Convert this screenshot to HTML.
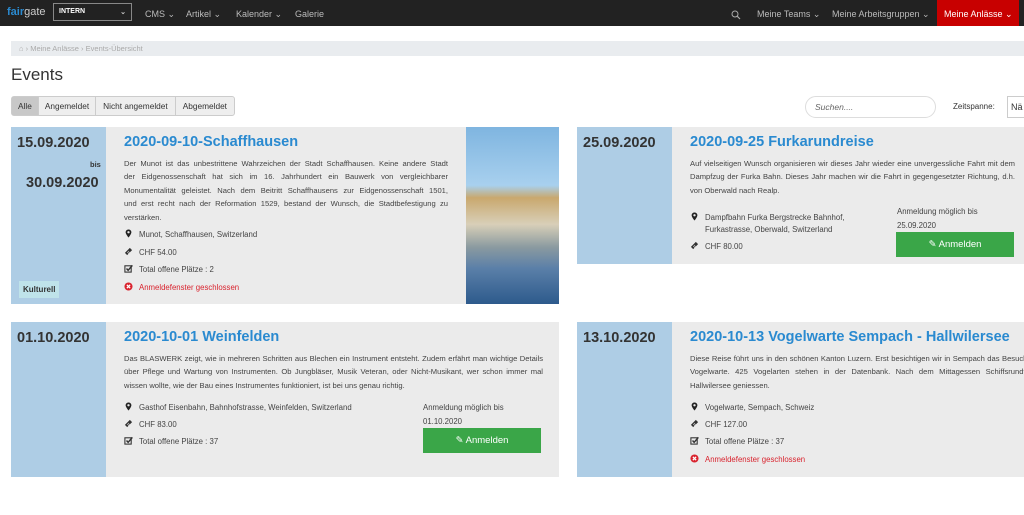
<!DOCTYPE html>
<html><head><meta charset="utf-8"><style>
*{margin:0;padding:0;box-sizing:border-box}
body{width:1024px;height:515px;overflow:hidden;background:#fff;font-family:"Liberation Sans",sans-serif;color:#333;position:relative}
.a{position:absolute}
.nav{left:0;top:0;width:1024px;height:26px;background:#222}
.nt{color:#bbb;font-size:9px;top:9px;white-space:nowrap}
.card{background:#ebebeb;overflow:hidden}
.date{background:#aecde5;position:absolute;left:0;top:0;bottom:0;width:95px}
.dt{font-size:14.5px;font-weight:bold;color:#333;position:absolute}
.ti{font-size:14.5px;font-weight:bold;color:#2a8ad0;position:absolute;left:113px;top:7px;white-space:nowrap}
.tx{font-size:7.6px;line-height:13.4px;color:#444;position:absolute;left:113px;text-align:justify}
.tx .j{text-align:justify;text-align-last:justify;white-space:nowrap}
.li{font-size:7.8px;color:#444;position:absolute;left:113px;white-space:nowrap;line-height:11px}
.li svg{display:inline-block;width:9px;height:9px;margin-right:6px;vertical-align:-1px}
.red{color:#d9232e}
.btn{background:#3aa648;color:#fff;font-size:9.5px;text-align:center;line-height:25px;position:absolute;width:118px;height:25px}
.ab{font-size:7.8px;color:#444;position:absolute;line-height:13.5px}
</style></head><body>
<svg width="0" height="0" style="position:absolute">
<defs>
<symbol id="pin" viewBox="0 0 10 10"><path d="M5 0.5C3 0.5 1.8 2 1.8 3.6 1.8 5.6 5 9.5 5 9.5S8.2 5.6 8.2 3.6C8.2 2 7 0.5 5 0.5Z" fill="#222"/><circle cx="5" cy="3.6" r="1.3" fill="#ebebeb"/></symbol>
<symbol id="tk" viewBox="0 0 10 10"><path d="M1 6.5L6.5 1 9 3.5 3.5 9Z" fill="#333"/><path d="M3.5 5.5L5.5 7.5M4.5 4.5L6.5 6.5" stroke="#ebebeb" stroke-width=".6"/></symbol>
<symbol id="ck" viewBox="0 0 10 10"><rect x="1" y="2" width="7" height="7" fill="none" stroke="#333" stroke-width="1.2"/><path d="M2.8 5L4.6 7 9.3 1.5" fill="none" stroke="#333" stroke-width="1.6"/></symbol>
<symbol id="x" viewBox="0 0 10 10"><circle cx="5" cy="5" r="4.5" fill="#d9232e"/><path d="M3.2 3.2L6.8 6.8M6.8 3.2L3.2 6.8" stroke="#fff" stroke-width="1.4"/></symbol>
</defs></svg>
<div class="a nav"></div>
<div class="a" style="left:7px;top:6px;font-size:11px;font-weight:bold;color:#2a8ad0">fair<span style="color:#ccc;font-weight:normal">gate</span></div>
<div class="a" style="left:53px;top:3px;width:79px;height:18px;border:1px solid #888;color:#fff;font-size:7px;font-weight:bold;padding:4px 5px">INTERN<span style="float:right;color:#ccc">⌄</span></div>
<div class="a nt" style="left:145px">CMS ⌄</div>
<div class="a nt" style="left:186px">Artikel ⌄</div>
<div class="a nt" style="left:236px">Kalender ⌄</div>
<div class="a nt" style="left:295px">Galerie</div>
<div class="a" style="left:731px;top:7px"><svg width="10" height="10" viewBox="0 0 10 10"><circle cx="4" cy="4" r="3" fill="none" stroke="#aaa" stroke-width="1"/><path d="M6.2 6.2L9 9" stroke="#aaa" stroke-width="1.2"/></svg></div>
<div class="a nt" style="left:757px">Meine Teams ⌄</div>
<div class="a nt" style="left:832px">Meine Arbeitsgruppen ⌄</div>
<div class="a" style="left:937px;top:0;width:82px;height:26px;background:#c80000"></div>
<div class="a nt" style="left:944px;color:#fff">Meine Anlässe ⌄</div>
<div class="a" style="left:11px;top:41px;width:1013px;height:15px;background:#e9ecef"></div>
<div class="a" style="left:19px;top:44px;font-size:7.5px;color:#aaa">⌂ › Meine Anlässe › Events-Übersicht</div>
<div class="a" style="left:11px;top:65px;font-size:17px;color:#333">Events</div>
<div class="a" style="left:11px;top:96px;height:20px;border:1px solid #ccc;border-radius:3px;display:flex;font-size:8.3px;color:#333;background:#eee">
<div style="background:#c8c8c8;padding:0 6px;line-height:18px">Alle</div>
<div style="padding:0 6px;line-height:18px;border-left:1px solid #ccc">Angemeldet</div>
<div style="padding:0 7px;line-height:18px;border-left:1px solid #ccc">Nicht angemeldet</div>
<div style="padding:0 7px;line-height:18px;border-left:1px solid #ccc">Abgemeldet</div></div>
<div class="a" style="left:805px;top:96px;width:131px;height:22px;border:1px solid #ddd;border-radius:11px;font-size:8.5px;font-style:italic;color:#666;padding:5px 9px">Suchen....</div>
<div class="a" style="left:953px;top:102px;font-size:8px;color:#333">Zeitspanne:</div>
<div class="a" style="left:1007px;top:96px;width:30px;height:22px;border:1px solid #ccc;font-size:9px;padding:5px 3px">Nä</div>

<div class="a card" style="left:11px;top:127px;width:548px;height:177px">
<div class="date"></div>
<div class="dt" style="left:6px;top:8px">15.09.2020</div>
<div class="a" style="left:79px;top:33px;font-size:7.5px;font-weight:bold">bis</div>
<div class="dt" style="left:15px;top:48px">30.09.2020</div>
<div class="a" style="left:8px;top:154px;background:#bfe3ea;font-size:8px;font-weight:bold;padding:4px 4px">Kulturell</div>
<div class="ti">2020-09-10-Schaffhausen</div>
<div class="tx" style="top:30px;width:324px">
<div class="j">Der Munot ist das unbestrittene Wahrzeichen der Stadt Schaffhausen. Keine andere Stadt</div>
<div class="j">der Eidgenossenschaft hat sich im 16. Jahrhundert ein Bauwerk von vergleichbarer</div>
<div class="j">Monumentalität geleistet. Nach dem Beitritt Schaffhausens zur Eidgenossenschaft 1501,</div>
<div class="j">und erst recht nach der Reformation 1529, bestand der Wunsch, die Stadtbefestigung zu</div>
<div>verstärken.</div></div>
<div class="li" style="top:102px"><svg><use href="#pin"/></svg>Munot, Schaffhausen, Switzerland</div>
<div class="li" style="top:120px"><svg><use href="#tk"/></svg>CHF 54.00</div>
<div class="li" style="top:137px"><svg><use href="#ck"/></svg>Total offene Plätze : 2</div>
<div class="li red" style="top:155px"><svg><use href="#x"/></svg>Anmeldefenster geschlossen</div>
<div class="a" style="left:455px;top:0;width:93px;height:177px;background:linear-gradient(#7fb5e0 0%,#a8d0ee 33%,#c9a86e 40%,#d8cfb8 55%,#8a9aa0 68%,#5a7fa8 80%,#2d5a8c 100%)"></div>
</div>

<div class="a card" style="left:577px;top:127px;width:460px;height:137px">
<div class="date"></div>
<div class="dt" style="left:6px;top:8px">25.09.2020</div>
<div class="ti">2020-09-25 Furkarundreise</div>
<div class="tx" style="top:30px;width:325px">Auf vielseitigen Wunsch organisieren wir dieses Jahr wieder eine unvergessliche Fahrt mit dem Dampfzug der Furka Bahn. Dieses Jahr machen wir die Fahrt in gegengesetzter Richtung, d.h. von Oberwald nach Realp.</div>
<div class="li" style="top:85px;line-height:12px"><svg><use href="#pin"/></svg>Dampfbahn Furka Bergstrecke Bahnhof,<br><span style="margin-left:15px">Furkastrasse, Oberwald, Switzerland</span></div>
<div class="li" style="top:114px"><svg><use href="#tk"/></svg>CHF 80.00</div>
<div class="ab" style="left:320px;top:78px">Anmeldung möglich bis<br>25.09.2020</div>
<div class="btn" style="left:319px;top:105px">✎ Anmelden</div>
</div>

<div class="a card" style="left:11px;top:322px;width:548px;height:155px">
<div class="date"></div>
<div class="dt" style="left:6px;top:8px">01.10.2020</div>
<div class="ti">2020-10-01 Weinfelden</div>
<div class="tx" style="top:30px;width:419px">Das BLASWERK zeigt, wie in mehreren Schritten aus Blechen ein Instrument entsteht. Zudem erfährt man wichtige Details über Pflege und Wartung von Instrumenten. Ob Jungbläser, Musik Veteran, oder Nicht-Musikant, wer schon immer mal wissen wollte, wie der Bau eines Instrumentes funktioniert, ist bei uns genau richtig.</div>
<div class="li" style="top:80px"><svg><use href="#pin"/></svg>Gasthof Eisenbahn, Bahnhofstrasse, Weinfelden, Switzerland</div>
<div class="li" style="top:97px"><svg><use href="#tk"/></svg>CHF 83.00</div>
<div class="li" style="top:114px"><svg><use href="#ck"/></svg>Total offene Plätze : 37</div>
<div class="ab" style="left:412px;top:79px">Anmeldung möglich bis<br>01.10.2020</div>
<div class="btn" style="left:412px;top:106px">✎ Anmelden</div>
</div>

<div class="a card" style="left:577px;top:322px;width:460px;height:155px">
<div class="date"></div>
<div class="dt" style="left:6px;top:8px">13.10.2020</div>
<div class="ti">2020-10-13 Vogelwarte Sempach - Hallwilersee</div>
<div class="tx" style="top:30px;width:385px">Diese Reise führt uns in den schönen Kanton Luzern. Erst besichtigen wir in Sempach das Besucherzentrum der Vogelwarte. 425 Vogelarten stehen in der Datenbank. Nach dem Mittagessen Schiffsrundfahrt auf dem Hallwilersee geniessen.</div>
<div class="li" style="top:80px"><svg><use href="#pin"/></svg>Vogelwarte, Sempach, Schweiz</div>
<div class="li" style="top:97px"><svg><use href="#tk"/></svg>CHF 127.00</div>
<div class="li" style="top:114px"><svg><use href="#ck"/></svg>Total offene Plätze : 37</div>
<div class="li red" style="top:132px"><svg><use href="#x"/></svg>Anmeldefenster geschlossen</div>
</div>
</body></html>
